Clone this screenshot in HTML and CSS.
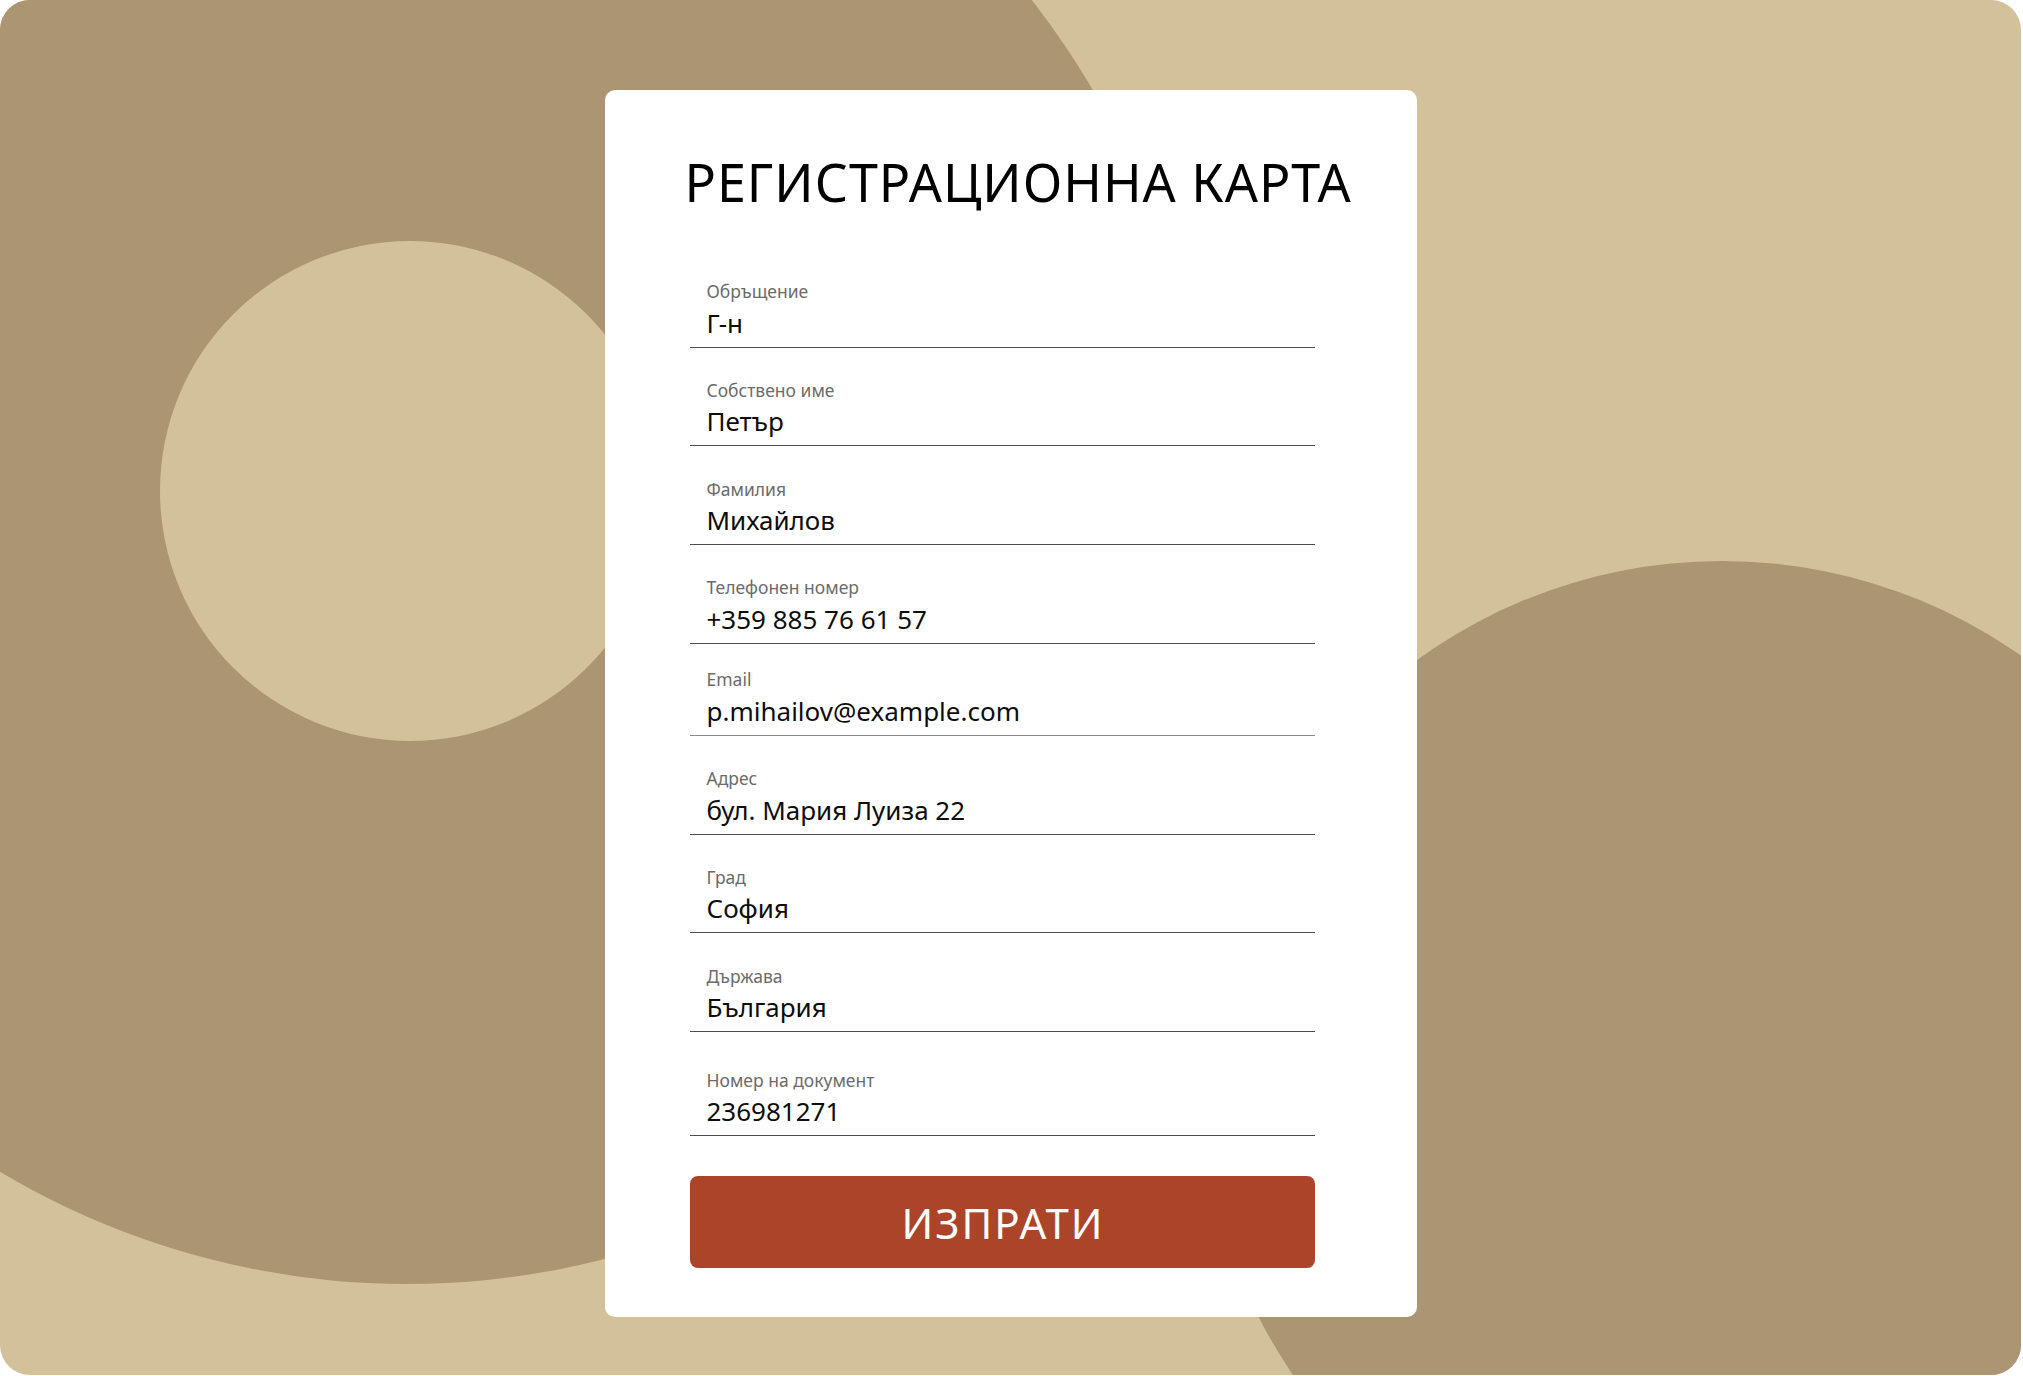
FILE: index.html
```html
<!DOCTYPE html>
<html lang="bg">
<head>
<meta charset="utf-8">
<title>Регистрационна карта</title>
<link rel="stylesheet" href="styles.css">
</head>
<body>
<div class="frame">
  <div class="blob blob-left"></div>
  <div class="blob blob-left-inner"></div>
  <div class="blob blob-right"></div>

  <form class="card">
    <h1 class="title">РЕГИСТРАЦИОННА КАРТА</h1>

    <div class="field">
      <div class="label">Обръщение</div>
      <div class="value">Г-н</div>
    </div>
    <div class="field">
      <div class="label">Собствено име</div>
      <div class="value">Петър</div>
    </div>
    <div class="field">
      <div class="label">Фамилия</div>
      <div class="value">Михайлов</div>
    </div>
    <div class="field">
      <div class="label">Телефонен номер</div>
      <div class="value">+359 885 76 61 57</div>
    </div>
    <div class="field field-tight field-light">
      <div class="label">Email</div>
      <div class="value">p.mihailov@example.com</div>
    </div>
    <div class="field">
      <div class="label">Адрес</div>
      <div class="value">бул. Мария Луиза 22</div>
    </div>
    <div class="field">
      <div class="label">Град</div>
      <div class="value">София</div>
    </div>
    <div class="field">
      <div class="label">Държава</div>
      <div class="value">България</div>
    </div>
    <div class="field field-loose">
      <div class="label">Номер на документ</div>
      <div class="value">236981271</div>
    </div>

    <button type="button" class="submit">ИЗПРАТИ</button>
  </form>
</div>
</body>
</html>
```

FILE: styles.css
```css
* {
  box-sizing: border-box;
}

html, body {
  margin: 0;
  padding: 0;
  background: #ffffff;
}

body {
  font-family: "Noto Sans", "Open Sans", sans-serif;
}

.frame {
  position: relative;
  width: 2021px;
  height: 1375px;
  border-radius: 30px;
  overflow: hidden;
  background: #d2c19b;
  display: flex;
  justify-content: center;
  align-items: flex-start;
  padding-top: 90px;
}

.blob {
  position: absolute;
  border-radius: 50%;
}

.blob-left {
  left: -387px;
  top: -304px;
  width: 1588px;
  height: 1588px;
  background: #ab9572;
}

.blob-left-inner {
  left: 160px;
  top: 241px;
  width: 500px;
  height: 500px;
  background: #d2c19b;
}

.blob-right {
  left: 1202px;
  top: 561px;
  width: 1040px;
  height: 1040px;
  background: #ab9572;
}

.card {
  position: relative;
  z-index: 1;
  width: 812px;
  margin: 0;
  padding: 66px 102px 49px 85px;
  background: #ffffff;
  border-radius: 10px;
  display: flex;
  flex-direction: column;
}

.title {
  margin: 0 -40px 73px -5px;
  font-size: 52px;
  line-height: 52px;
  font-weight: 400;
  letter-spacing: 1px;
  color: #000000;
  text-align: left;
  white-space: nowrap;
}

.field {
  padding: 0 0 9px 17px;
  border-bottom: 1.5px solid #4d4d4d;
  margin-top: 32.3px;
}

.title + .field {
  margin-top: 0;
}

.field-tight {
  margin-top: 25.5px;
}

.field-loose {
  margin-top: 37.5px;
}

.field-light {
  border-bottom-color: #8a8a8a;
}

.label {
  font-size: 17.5px;
  line-height: 20px;
  color: #6b6b6b;
  margin-bottom: 6.5px;
}

.value {
  font-size: 26px;
  line-height: 30px;
  color: #0d0d0d;
}

.submit {
  margin-top: 40px;
  height: 92px;
  width: 100%;
  border: none;
  border-radius: 8px;
  background: #ab4429;
  color: #ffffff;
  font-family: "Noto Sans", "Open Sans", sans-serif;
  font-size: 42px;
  font-weight: 400;
  letter-spacing: 2px;
  display: flex;
  align-items: center;
  justify-content: center;
  padding: 0 0 0 2px;
  cursor: pointer;
}
```
